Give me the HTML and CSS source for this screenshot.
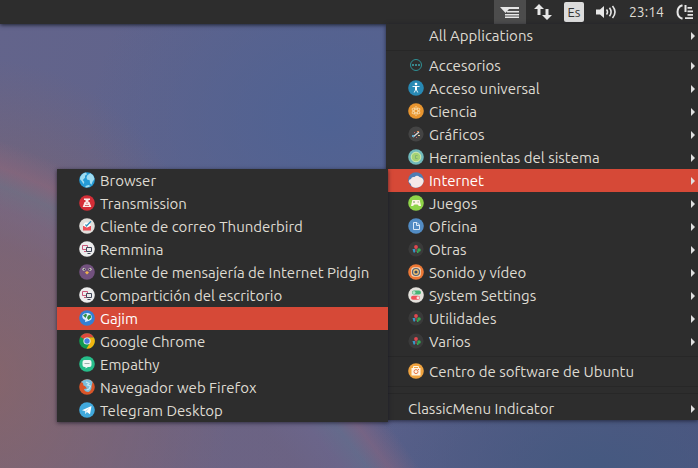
FILE: index.html
```html
<!DOCTYPE html>
<html lang="es">
<head>
<meta charset="utf-8">
<title>ClassicMenu Indicator</title>
<link rel="stylesheet" href="styles.css">
</head>
<body>
<svg class="sprite" aria-hidden="true">
  <symbol id="accessories" viewBox="0 0 16 16"><circle cx="8" cy="8" r="5.5" fill="none" stroke="#2f8f94" stroke-width="1"/><path d="M4 7h2v2H4zM7 7h2v2H7zM10 7h2v2h-2z" fill="#39868c"/></symbol>
  <symbol id="access" viewBox="0 0 16 16"><circle cx="8" cy="8" r="7.8" fill="#2889b4"/><circle cx="8" cy="4" r="1.3" fill="#fff"/><path d="M4.5 6.500h7M8 9l-1.800 3.500M8 9l1.800 3.500" stroke="#e8f3fa" stroke-width="1" fill="none"/><path d="M7 6h2v4H7z" fill="#fff"/></symbol>
  <symbol id="science" viewBox="0 0 16 16"><circle cx="8" cy="8" r="7.8" fill="#e8952f"/><g fill="none" stroke="#f7d6a2" stroke-width=".8"><ellipse cx="8" cy="8" rx="1.8" ry="4.500"/><ellipse cx="8" cy="8" rx="1.8" ry="4.500" transform="rotate(60 8 8)"/><ellipse cx="8" cy="8" rx="1.8" ry="4.500" transform="rotate(120 8 8)"/></g></symbol>
  <symbol id="graphics" viewBox="0 0 16 16"><circle cx="8" cy="8" r="7.6" fill="#444"/><path d="M5 11l6-5" stroke="#ddd" stroke-width="1.200"/><path d="M4 9h2v2H4z" fill="#5fa9ce"/><path d="M9 5h2v1H9z" fill="#e38a53"/><path d="M10 9h2v1h-2z" fill="#ead2a0"/><path d="M6 6h1v1H6zM8 11h1v1H8z" fill="#d05a5a"/></symbol>
  <symbol id="system" viewBox="0 0 16 16"><circle cx="8" cy="8" r="7.8" fill="#70b9bb"/><circle cx="8" cy="8" r="4.800" fill="#a5d273" stroke="#d3ebb4" stroke-width="1"/><path d="M9.500 6.500h-2v3h2" stroke="#83b075" stroke-width="1" fill="none"/></symbol>
  <symbol id="internet" viewBox="0 0 16 16"><circle cx="8" cy="8" r="7.8" fill="#4e7db4"/><path d="M.8 10Q.5 7.500 3 7Q3.500 4.500 6.500 5Q9 2.500 11.500 5Q15 5.500 15.700 9A7.800 7.800 0 0 1 3.500 14.300Q3.500 12 .8 10z" fill="#f5e9e8"/></symbol>
  <symbol id="games" viewBox="0 0 16 16"><circle cx="8" cy="8" r="7.8" fill="#8fd449"/><path d="M4.300 5h7.400l1.300 6h-2L9.500 9.500h-3L5 11H3z" fill="#fff4e6"/><path d="M5 7h2M6 6v2M9.500 7h1.500" stroke="#a3b68a" stroke-width="1"/></symbol>
  <symbol id="office" viewBox="0 0 16 16"><circle cx="8" cy="8" r="7.8" fill="#528cc4"/><path d="M5.500 4.500h3.500l2.500 2.500V11.500h-6zM8.500 4.500v3h3" stroke="#d9e9f7" stroke-width="1" fill="none"/></symbol>
  <symbol id="other" viewBox="0 0 16 16"><circle cx="8" cy="8" r="7.600" fill="#3a3a3a"/><circle cx="8" cy="6" r="1.900" fill="#e04850"/><path d="M4.500 8h2.500v3.500H5.500z" fill="#3498c8"/><circle cx="11" cy="9" r="1.800" fill="#35a853"/><path d="M8 7v4" stroke="#b0535a" stroke-width="1" fill="none"/><path d="M9 10h1.500v2H9z" fill="#35a853"/></symbol>
  <symbol id="sound" viewBox="0 0 16 16"><circle cx="8" cy="8" r="7.800" fill="#ec7836"/><rect x="3.200" y="3.200" width="9.600" height="9.600" rx="3" fill="#f5d9b6"/><circle cx="8" cy="8" r="3.500" fill="#f5c26d" stroke="#52627a" stroke-width="1.200"/><circle cx="8" cy="8" r="1.600" fill="#384c69"/></symbol>
  <symbol id="settings" viewBox="0 0 16 16"><circle cx="8" cy="8" r="7.800" fill="#e4e1dc"/><rect x="4" y="3.500" width="9" height="4" rx="2" fill="#48b476"/><circle cx="6" cy="5.500" r="1.500" fill="#b9e2cb"/><rect x="3" y="8.700" width="9" height="4" rx="2" fill="#ef5059"/><circle cx="10" cy="10.700" r="1.500" fill="#f7dedf"/></symbol>
  <symbol id="software" viewBox="0 0 16 16"><circle cx="8" cy="8" r="7.800" fill="#f0a33f"/><path d="M3.500 5h9v7.500h-9z" fill="#fff4e3"/><path d="M5.500 5V3.500h5V5" stroke="#fff4e3" fill="none"/><circle cx="8" cy="8.600" r="2" fill="none" stroke="#e6784b" stroke-width="1"/><path d="M10 7l1-1" stroke="#e6784b"/></symbol>
  <symbol id="browser" viewBox="0 0 16 16"><circle cx="8" cy="8" r="7.800" fill="#259bd6"/><path d="M1.200 5Q3.500.8 7 .4l1 1.800-2 1.500v2.100L3.800 8l1.500 2-.6 2.200L2.600 9 1 7.200zM8.500 3l3-1.800 2.800 2.300L15.500 7l-2 2.800-1 3-1.500-1.500-.3-3L8 7.500l-.5-2.300zM6.500 14l3-1 2 1Q9 15.800 6.500 15.400z" fill="#9fdcf1"/></symbol>
  <symbol id="transmission" viewBox="0 0 16 16"><circle cx="8" cy="8" r="7.800" fill="#d42e37"/><path d="M5 3.500h6V5H9.500v2h1l1.800 5H3.700l1.800-5h1V5H5z" fill="#fbe9e7"/><path d="M6 10.500h4" stroke="#d9686c" stroke-width="1"/><path d="M7.500 7.500h1v1.500h-1z" fill="#d9686c"/></symbol>
  <symbol id="mail" viewBox="0 0 16 16"><circle cx="8" cy="8" r="7.800" fill="#e2dfdb"/><path d="M4 7.500l4 2 4-2v5H4z" fill="#ee4e58"/><path d="M4 7.500l2-3h4l2 3-4 2z" fill="#fff"/><path d="M6.500 6.500l1 1.500L12 3.200" stroke="#2d8fb8" stroke-width="1.300" fill="none"/></symbol>
  <symbol id="screens" viewBox="0 0 16 16"><circle cx="8" cy="8" r="7.800" fill="#ececec"/><path d="M3.500 4.500h5v4h-5zM5 10.500h2.500" stroke="#c9577b" stroke-width="1" fill="none"/><path d="M7.500 6.500h5v4h-5z" fill="#e8e8e8" stroke="#3f4658" stroke-width="1"/><path d="M8.500 12.500h3" stroke="#3f4658" stroke-width="1"/></symbol>
  <symbol id="pidgin" viewBox="0 0 16 16"><circle cx="8" cy="8" r="7.800" fill="#72517e"/><circle cx="5" cy="5.300" r="1.500" fill="#dde1c9"/><circle cx="11" cy="5.300" r="1.500" fill="#dde1c9"/><circle cx="5.400" cy="5.400" r=".9" fill="#423653"/><circle cx="10.600" cy="5.400" r=".9" fill="#423653"/><path d="M6 8.500l2-1.500 2 1.500-2 2z" fill="#f0b44d"/></symbol>
  <symbol id="gajim" viewBox="0 0 16 16"><circle cx="8" cy="8" r="7.800" fill="#347fd4"/><path d="M3.500 5Q5 3 8 3q4 0 4.700 3.500T9.500 11L6 12l.3-2Q2.500 8.500 3.500 5z" fill="#dcefff"/><path d="M4 5.500l3-2 1 1.500-1.500 3zM9 5.500l2.500-.8.8 2.800L9.500 10l-1.500-2z" fill="#318e43"/></symbol>
  <symbol id="chrome" viewBox="0 0 16 16"><circle cx="8" cy="8" r="7.800" fill="#129a51"/><path d="M8 8L1.300 4A7.800 7.800 0 0 1 14.900 4.400H8z" fill="#dc483c"/><path d="M8 4.400h6.900A7.800 7.800 0 0 1 7.500 15.800L11.100 9.800z" fill="#f2b50f"/><path d="M1.300 4l3.500 5.800L8 8z" fill="#129a51"/><circle cx="8" cy="8" r="3.600" fill="#f0f0f0"/><circle cx="8" cy="8" r="2.700" fill="#447ee0"/></symbol>
  <symbol id="empathy" viewBox="0 0 16 16"><circle cx="8" cy="8" r="7.800" fill="#27bd8a"/><path d="M5.500 4h5Q12.500 4 12.500 6v3q0 2-2 2H9l-2.500 1.500V11h-1q-2 0-2-2V6q0-2 2-2z" fill="#f0f6f4"/><path d="M5.500 7.500h5" stroke="#9ab5ad" stroke-width="1"/></symbol>
  <symbol id="firefox" viewBox="0 0 16 16"><circle cx="8" cy="8" r="7.800" fill="#d95528"/><path d="M2 3Q5 .2 8 .2q4 0 5.500 3l-1 4Q13 11 9.500 13 5.500 13 5 10l3-.5L6 7 4.500 6.500 4 4z" fill="#79bfdc"/><path d="M7 3l3 1.500L8.500 6l3 1-1.500 3-2.500 1" stroke="#c7e9f2" stroke-width="1.200" fill="none"/></symbol>
  <symbol id="telegram" viewBox="0 0 16 16"><circle cx="8" cy="8" r="7.800" fill="#40a9dd"/><path d="M3 8.200L12.500 4 11 12.200 7.900 10l-1.600 2-.4-3z" fill="#fff"/><path d="M6.200 9L11 5.500 7.200 9.800l-.8 2z" fill="#b8dcef"/></symbol>
</svg>

<header class="panel">
  <button class="indicator active" aria-label="Classic menu"><svg width="20" height="12" viewBox="0 0 20 12"><path d="M0 1h19v2H9L5.500 7zM7 5h12v1.500H7zM5 8h14v1.500H5zM5 10.500h14V12H5z" fill="#e6e6e6"/></svg></button>
  <button class="indicator" aria-label="Red"><svg width="18" height="16" viewBox="0 0 18 16"><path d="M5 0l5 5H6.500v6h-3V5H0zM13 16l-5-5h3.500V5h3v6H18z" fill="#e6e6e6"/></svg></button>
  <button class="indicator"><span class="layout">Es</span></button>
  <button class="indicator" aria-label="Sonido"><svg width="21" height="14" viewBox="0 0 21 14"><path d="M0 4.500h4L8 1v12L4 9.500H0z" fill="#e6e6e6"/><path d="M10.500 4.500q2 2.500 0 5M13.500 2.700q3.200 4.300 0 8.600M16.500 1q5 6 0 12" fill="none" stroke="#e6e6e6" stroke-width="1.600"/></svg></button>
  <button class="indicator clock">23:14</button>
  <button class="indicator" aria-label="Sesión"><svg width="18" height="16" viewBox="0 0 18 16"><path d="M6.500 1.300A7 7 0 0 0 6.500 14.700M9.500 1v7" fill="none" stroke="#e6e6e6" stroke-width="2"/><path d="M11.500 3H16v1.800h-4.500zM11.500 6.500H17v1.800h-5.500zM11.500 10H17v1.800h-5.500zM9 13.200h8V15H9z" fill="#e6e6e6"/></svg></button>
</header>

<main class="desktop">
  <ul class="menu">
    <li><button class="item more"><span class="icon"></span>All Applications</button></li>
    <li class="separator" role="separator"></li>
    <li><button class="item more"><svg class="icon"><use href="#accessories"/></svg>Accesorios</button></li>
    <li><button class="item more"><svg class="icon"><use href="#access"/></svg>Acceso universal</button></li>
    <li><button class="item more"><svg class="icon"><use href="#science"/></svg>Ciencia</button></li>
    <li><button class="item more"><svg class="icon"><use href="#graphics"/></svg>Gráficos</button></li>
    <li><button class="item more"><svg class="icon"><use href="#system"/></svg>Herramientas del sistema</button></li>
    <li class="open"><button class="item more selected"><svg class="icon"><use href="#internet"/></svg>Internet</button>
      <ul class="menu submenu">
        <li><button class="item"><svg class="icon"><use href="#browser"/></svg>Browser</button></li>
        <li><button class="item"><svg class="icon"><use href="#transmission"/></svg>Transmission</button></li>
        <li><button class="item"><svg class="icon"><use href="#mail"/></svg>Cliente de correo Thunderbird</button></li>
        <li><button class="item"><svg class="icon"><use href="#screens"/></svg>Remmina</button></li>
        <li><button class="item"><svg class="icon"><use href="#pidgin"/></svg>Cliente de mensajería de Internet Pidgin</button></li>
        <li><button class="item"><svg class="icon"><use href="#screens"/></svg>Compartición del escritorio</button></li>
        <li><button class="item selected"><svg class="icon"><use href="#gajim"/></svg>Gajim</button></li>
        <li><button class="item"><svg class="icon"><use href="#chrome"/></svg>Google Chrome</button></li>
        <li><button class="item"><svg class="icon"><use href="#empathy"/></svg>Empathy</button></li>
        <li><button class="item"><svg class="icon"><use href="#firefox"/></svg>Navegador web Firefox</button></li>
        <li><button class="item"><svg class="icon"><use href="#telegram"/></svg>Telegram Desktop</button></li>
      </ul>
    </li>
    <li><button class="item more"><svg class="icon"><use href="#games"/></svg>Juegos</button></li>
    <li><button class="item more"><svg class="icon"><use href="#office"/></svg>Oficina</button></li>
    <li><button class="item more"><svg class="icon"><use href="#other"/></svg>Otras</button></li>
    <li><button class="item more"><svg class="icon"><use href="#sound"/></svg>Sonido y vídeo</button></li>
    <li><button class="item more"><svg class="icon"><use href="#settings"/></svg>System Settings</button></li>
    <li><button class="item more"><svg class="icon"><use href="#other"/></svg>Utilidades</button></li>
    <li><button class="item more"><svg class="icon"><use href="#other"/></svg>Varios</button></li>
    <li class="separator" role="separator"></li>
    <li><button class="item"><svg class="icon"><use href="#software"/></svg>Centro de software de Ubuntu</button></li>
    <li class="separator" role="separator"></li>
    <li class="separator" role="separator"></li>
    <li><button class="item more">ClassicMenu Indicator</button></li>
  </ul>
</main>
</body>
</html>
```
FILE: styles.css
```css
* {
  box-sizing: border-box;
}

body {
  margin: 0;
  min-height: 100vh;
  display: flex;
  flex-direction: column;
  overflow: hidden;
  font: 15px/24px Ubuntu, "Noto Sans", sans-serif;
  font-variant-ligatures: none;
  color: #dfdbd2;
  background:
    radial-gradient(circle at -280px 932px, rgba(125, 100, 122, 0.45) 740px, rgba(125, 105, 135, 0.45) 775px, rgba(112, 118, 140, 0.45) 797px, rgba(150, 104, 125, 0.45) 814px, transparent 840px),
    radial-gradient(ellipse 240px 320px at -10px 380px, #8b6560, transparent),
    radial-gradient(ellipse 240px 200px at 330px 120px, #4f6293, transparent),
    radial-gradient(ellipse 240px 120px at 600px 468px, #455980, transparent),
    linear-gradient(100deg, #63648b, #5c628c 50%, #4f5680);
}

button {
  border: 0;
  padding: 0;
  background: none;
  color: inherit;
  font: inherit;
  font-variant-ligatures: inherit;
}

ul {
  list-style: none;
  margin: 0;
  padding: 0;
}

.sprite {
  position: absolute;
  width: 0;
  height: 0;
}

.panel {
  display: flex;
  justify-content: flex-end;
  height: 24px;
  background: #2d2d2d;
  box-shadow: 0 1px 4px #1c2030;
}

.indicator {
  display: flex;
  align-items: center;
  padding: 0 6px;
}

.indicator.active {
  margin-right: 2px;
  background: #4c4c4c;
}

.indicator:last-child {
  padding-right: 4px;
}

.clock {
  font-size: 14px;
}

.layout {
  width: 20px;
  height: 20px;
  border-radius: 2px;
  background: #dcdcdc;
  color: #333;
  font-size: 13px;
  line-height: 20px;
  text-align: center;
}

.desktop {
  display: flex;
  flex: 1;
  justify-content: flex-end;
  align-items: flex-start;
}

.menu {
  min-width: 312px;
  background: #2d2d2d;
  box-shadow: 0 1px 4px rgba(20, 20, 35, 0.7);
}

.open {
  position: relative;
}

.submenu {
  position: absolute;
  top: 0;
  right: calc(100% - 2px);
  min-width: 331px;
}

.item {
  display: flex;
  align-items: flex-start;
  gap: 5px;
  width: 100%;
  height: 23px;
  padding: 0 16px 0 22px;
  white-space: nowrap;
}

.item.more {
  padding-right: 3px;
}

.item.more::after {
  content: "";
  align-self: center;
  margin-left: auto;
  border: solid transparent;
  border-width: 4px 0 4px 4px;
  border-left-color: #dfdfdf;
}

.item.selected {
  background: #d64937;
  color: #fff;
}

.icon {
  flex: none;
  width: 16px;
  height: 16px;
  margin-top: 3px;
}

.separator {
  height: 7px;
  border-top: 3px solid #2d2d2d;
  border-bottom: 3px solid #2d2d2d;
  background: #272727;
}
```
